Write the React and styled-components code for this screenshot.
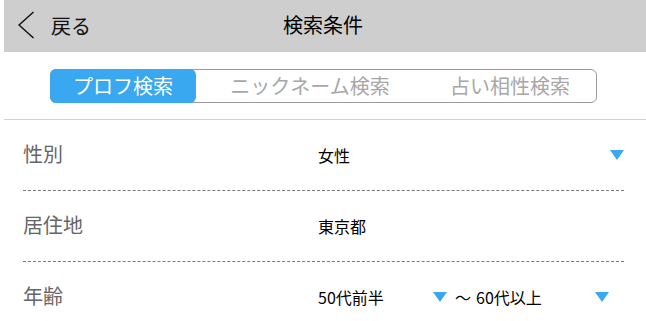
import React from "react";
import styled, { createGlobalStyle } from "styled-components";

const Global = createGlobalStyle`
  html, body { margin: 0; padding: 0; background: #fff; }
  body { font-family: "Noto Sans CJK JP", "Noto Sans", sans-serif; }
`;

const Page = styled.div`
  margin-left: 4px;
  width: 642px;
  background: #fff;
`;

const Header = styled.header`
  height: 52px;
  background: #cdcecd;
  display: grid;
  grid-template-columns: 1fr auto 1fr;
  align-items: center;
  padding-left: 14px;
  padding-right: 18px;
  box-sizing: border-box;
`;

const Back = styled.div`
  display: flex;
  align-items: center;
  gap: 16px;
  font-size: 20px;
  color: #111;
  line-height: 1;
`;

const Title = styled.h1`
  margin: 0 0 2px 0;
  font-size: 20px;
  font-weight: 400;
  color: #000;
  line-height: 1;
`;

const Tabs = styled.div`
  margin: 17px 0 0 46px;
  width: 547px;
  height: 34px;
  display: flex;
  border: 1px solid #9a9a9a;
  border-radius: 6px;
  box-sizing: border-box;
`;

const Tab = styled.div`
  flex: 0 0 ${(p) => p.$w}px;
  display: flex;
  align-items: center;
  justify-content: center;
  font-size: 20px;
  line-height: 1;
  color: ${(p) => (p.$active ? "#fff" : "#a7a7a7")};
  background: ${(p) => (p.$active ? "#39a8f0" : "transparent")};
  border-radius: 6px;
  margin: ${(p) => (p.$active ? "-1px 0 -1px -1px" : "0")};
`;

const Divider = styled.div`
  margin-top: 16px;
  height: 1px;
  background: #d2d2d2;
`;

const Row = styled.div`
  margin: 0 22px 0 19px;
  height: 70px;
  display: flex;
  align-items: center;
  border-bottom: ${(p) => (p.$last ? "none" : "1px dashed #7a7a7a")};
`;

const Label = styled.div`
  flex: 0 0 295px;
  font-size: 20px;
  color: #666;
  line-height: 1;
  padding-bottom: 2px;
`;

const Value = styled.div`
  flex: 1;
  display: flex;
  align-items: center;
  font-size: 16px;
  color: #000;
  line-height: 1;
`;

const Select = styled.div`
  display: flex;
  align-items: center;
  justify-content: space-between;
  ${(p) => (p.$w ? `flex: 0 0 ${p.$w}px;` : "flex: 1;")}
`;

const Arrow = styled.span`
  width: 0;
  height: 0;
  border-left: 7.5px solid transparent;
  border-right: 7.5px solid transparent;
  border-top: 10px solid #3aa8f0;
`;

const Tilde = styled.span`
  margin: 0 5px 0 8px;
`;

export default function App() {
  return (
    <>
      <Global />
      <Page>
        <Header>
          <Back>
            <svg width="17" height="30" viewBox="0 0 17 30">
              <polyline points="15.5,1 1,14 15.5,27" fill="none" stroke="#111" strokeWidth="1.5" />
            </svg>
            <span>戻る</span>
          </Back>
          <Title>検索条件</Title>
          <div />
        </Header>
        <Tabs>
          <Tab $w={146} $active>プロフ検索</Tab>
          <Tab $w={228}>ニックネーム検索</Tab>
          <Tab $w={172}>占い相性検索</Tab>
        </Tabs>
        <Divider />
        <Row>
          <Label>性別</Label>
          <Value>
            <Select>
              <span>女性</span>
              <Arrow />
            </Select>
          </Value>
        </Row>
        <Row>
          <Label>居住地</Label>
          <Value>東京都</Value>
        </Row>
        <Row $last>
          <Label>年齢</Label>
          <Value>
            <Select $w={129}>
              <span>50代前半</span>
              <Arrow />
            </Select>
            <Tilde>～</Tilde>
            <Select $w={133}>
              <span>60代以上</span>
              <Arrow />
            </Select>
          </Value>
        </Row>
      </Page>
    </>
  );
}
